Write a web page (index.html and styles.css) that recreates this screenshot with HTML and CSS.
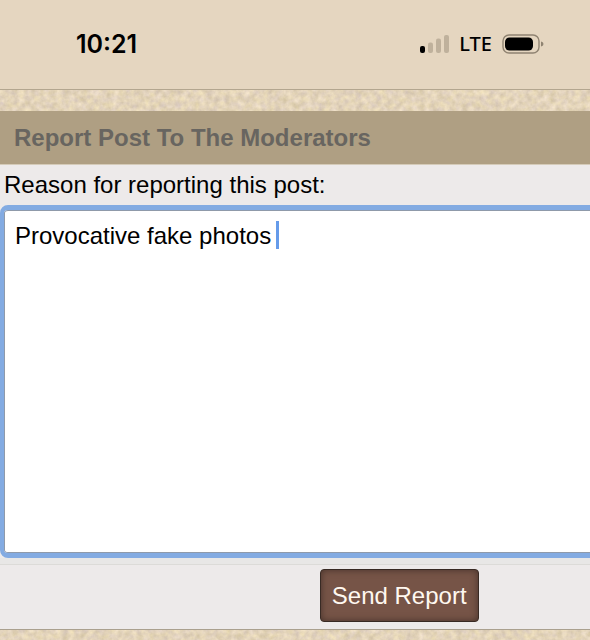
FILE: index.html
```
<!DOCTYPE html>
<html lang="en">
<head>
    <meta charset="UTF-8">
    <meta name="viewport" content="width=device-width, initial-scale=1.0">
    <title>Report Post To The Moderators</title>
    <link rel="stylesheet" href="styles.css">
</head>
<body>
    <header class="status-bar">
        <span class="time">10:21</span>
        <div class="status-icons">
            <svg class="signal" width="30" height="20" viewBox="0 0 30 20" aria-hidden="true">
                <rect x="1" y="12" width="5" height="7" rx="2" fill="#000"/>
                <rect x="9" y="8.5" width="5" height="10.5" rx="2" fill="#bfb19c"/>
                <rect x="17" y="4.5" width="5" height="14.5" rx="2" fill="#bfb19c"/>
                <rect x="25" y="1" width="5" height="18" rx="2" fill="#bfb19c"/>
            </svg>
            <span class="network">LTE</span>
            <svg class="battery" width="42" height="20" viewBox="0 0 42 20" aria-hidden="true">
                <rect x="1" y="1" width="36" height="18" rx="6" fill="none" stroke="#8f8371" stroke-width="1.4"/>
                <rect x="3" y="3.5" width="28" height="13" rx="4.5" fill="#000"/>
                <path d="M39 7.5c2 .4 2.4 1.4 2.4 2.5s-.4 2.1-2.4 2.5z" fill="#8f8371"/>
            </svg>
        </div>
    </header>

    <main>
        <svg class="paper" width="100%" height="100%" aria-hidden="true">
            <filter id="grain" x="0" y="0" width="100%" height="100%" color-interpolation-filters="sRGB">
                <feTurbulence type="fractalNoise" baseFrequency="0.16" numOctaves="3" seed="4"/>
                <feColorMatrix values="0.18 0 0 0 0.80  0.18 0 0 0 0.74  0.14 0.12 0 0 0.60  0 0 0 0 1"/>
            </filter>
            <rect width="100%" height="100%" filter="url(#grain)"/>
        </svg>

        <form class="panel">
            <h1>Report Post To The Moderators</h1>
            <label for="reason">Reason for reporting this post:</label>
            <div class="editor">
                <textarea id="reason" name="reason" spellcheck="false">Provocative fake photos</textarea>
                <span class="caret"></span>
            </div>
            <div class="actions">
                <button type="submit">Send Report</button>
            </div>
        </form>
    </main>
</body>
</html>
```
FILE: styles.css
```
* {
    box-sizing: border-box;
}
body {
    font-family: "Liberation Sans", Arial, sans-serif;
    font-size: 24px;
    color: #000;
    background-color: #e3d4b9;
    margin: 0;
    min-height: 100vh;
    display: flex;
    flex-direction: column;
    overflow: hidden;
}
.status-bar {
    display: flex;
    justify-content: space-between;
    align-items: center;
    height: 90px;
    padding: 0 46px 2px 76px;
    background-color: #e5d6c0;
    border-bottom: 1px solid #b3a68f;
}
.time {
    font-family: Inter, sans-serif;
    font-size: 25px;
    font-weight: 600;
}
.status-icons {
    display: flex;
    align-items: center;
}
.network {
    font-family: "Noto Sans", sans-serif;
    font-size: 20px;
    font-weight: 500;
    margin: 0 10px;
}
main {
    position: relative;
    flex: 1;
    padding: 21px 0 11px;
    overflow: hidden;
}
.paper {
    position: absolute;
    top: 0;
    left: 0;
}
/* the form is wider than the screen and runs off the right edge */
.panel {
    position: relative;
    width: 136%;
    background-color: #edeaea;
    border-bottom: 1px solid #aaa08e;
}
h1 {
    margin: 0;
    padding: 0 14px;
    font-size: 24px;
    line-height: 53px;
    color: #686560;
    background-color: #af9f83;
    border-bottom: 1px solid #d5cbb9;
}
label {
    display: block;
    padding: 0 4px;
    line-height: 40px;
}
.editor {
    position: relative;
    border-bottom: 6px solid #e8e7e6;
}
textarea {
    display: block;
    width: 100%;
    height: 353px;
    padding: 9px 11px;
    font: inherit;
    line-height: 34px;
    color: #000;
    background-color: #fff;
    border: 5px solid #83abe2;
    border-left-width: 4px;
    border-radius: 8px;
    box-shadow: inset 0 0 0 1px #8f9aaa;
    outline: none;
    resize: none;
}
.caret {
    position: absolute;
    top: 16px;
    left: 276px;
    width: 3px;
    height: 28px;
    background-color: #659bea;
}
.actions {
    border-top: 1px solid #dcdbd8;
    padding: 4px 4px 7px 0;
    text-align: center;
}
button {
    display: inline-block;
    vertical-align: top;
    height: 53px;
    padding: 0 11px;
    font: inherit;
    color: #fff8f0;
    background-color: #765447;
    border: 1px solid #382a24;
    border-radius: 4px;
    box-shadow: inset 0 0 7px #46322a;
    cursor: pointer;
}
```
